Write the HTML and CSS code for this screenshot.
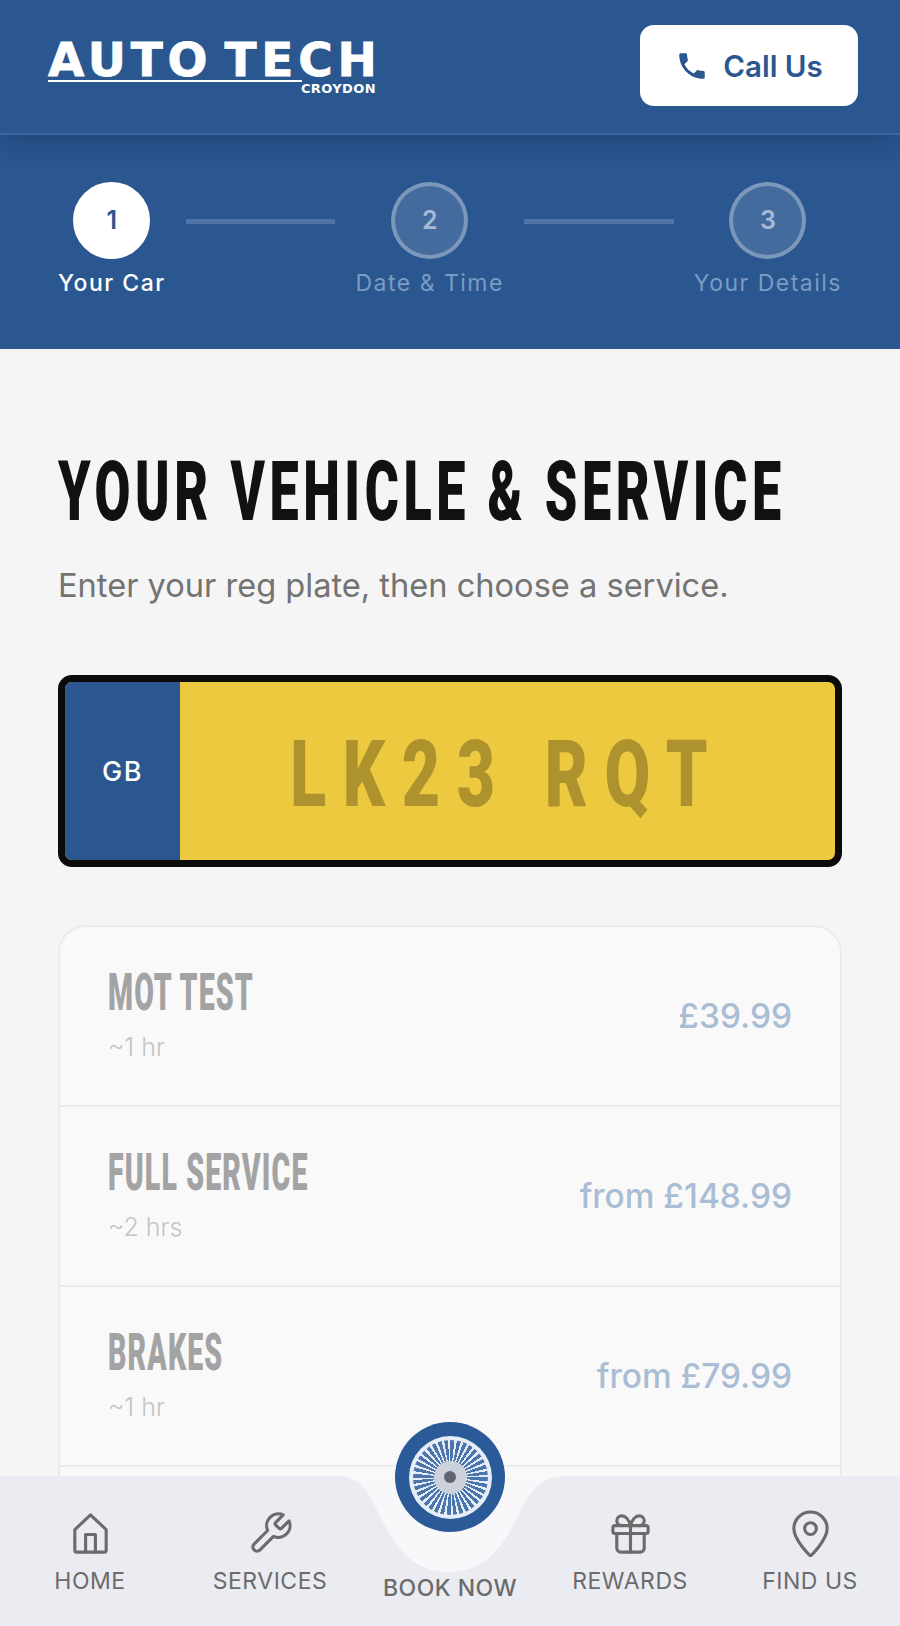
FILE: index.html
```html
<!DOCTYPE html>
<html lang="en">
<head>
  <meta charset="UTF-8">
  <meta name="viewport" content="width=device-width, initial-scale=1.0">
  <title>Book Now - Auto Tech Croydon</title>
  <link rel="stylesheet" href="styles.css">
</head>
<body>
  <header class="topbar">
    <a class="logo" href="#">
      <span class="logo-main">AUTO TECH</span>
      <span class="logo-rule"></span>
      <span class="logo-sub">CROYDON</span>
    </a>
    <a class="call-btn" href="#">
      <svg class="call-icon" viewBox="0 0 24 24"><path d="M6.62 10.79c1.44 2.83 3.76 5.14 6.59 6.59l2.2-2.2c.27-.27.67-.36 1.02-.24 1.12.37 2.33.57 3.57.57.55 0 1 .45 1 1V20c0 .55-.45 1-1 1-9.39 0-17-7.61-17-17 0-.55.45-1 1-1h3.5c.55 0 1 .45 1 1 0 1.25.2 2.45.57 3.57.11.35.03.74-.25 1.02l-2.2 2.2z"/></svg>
      Call Us
    </a>
  </header>

  <div class="stepper">
    <div class="step active">
      <div class="step-num">1</div>
      <span class="step-label">Your Car</span>
    </div>
    <div class="step-line"></div>
    <div class="step">
      <div class="step-num">2</div>
      <span class="step-label">Date &amp; Time</span>
    </div>
    <div class="step-line"></div>
    <div class="step">
      <div class="step-num">3</div>
      <span class="step-label">Your Details</span>
    </div>
  </div>

  <main class="content">
    <h1>YOUR VEHICLE &amp; SERVICE</h1>
    <p class="lead">Enter your reg plate, then choose a service.</p>

    <div class="plate">
      <div class="plate-gb">GB</div>
      <div class="plate-reg"><span>LK23 RQT</span></div>
    </div>

    <div class="services">
      <div class="service">
        <div>
          <h3>MOT TEST</h3>
          <p class="duration">~1 hr</p>
        </div>
        <span class="price">£39.99</span>
      </div>
      <div class="service">
        <div>
          <h3>FULL SERVICE</h3>
          <p class="duration">~2 hrs</p>
        </div>
        <span class="price">from £148.99</span>
      </div>
      <div class="service">
        <div>
          <h3>BRAKES</h3>
          <p class="duration">~1 hr</p>
        </div>
        <span class="price">from £79.99</span>
      </div>
      <div class="service"></div>
    </div>
  </main>

  <nav class="bottom-nav">
    <svg class="notch" viewBox="0 0 900 150"><path d="M336 0C362 0 368 16 380 40C398 78 418 96 449 96C480 96 500 78 518 40C530 16 538 0 566 0Z"/></svg>
    <a class="nav-item" href="#">
      <svg class="nav-icon" viewBox="0 0 24 24"><path d="M4 10l8-7.500 8 7.500v10.500a1 1 0 0 1-1 1H5a1 1 0 0 1-1-1z"/><path d="M9.500 21.500V12.500h5v9"/></svg>
      HOME
    </a>
    <a class="nav-item" href="#">
      <svg class="nav-icon" viewBox="0 0 24 24"><path d="M14.700 6.300a1 1 0 0 0 0 1.400l1.600 1.600a1 1 0 0 0 1.400 0l3.770-3.770a6 6 0 0 1-7.940 7.940l-6.910 6.910a2.120 2.120 0 0 1-3-3l6.910-6.910a6 6 0 0 1 7.940-7.940l-3.760 3.760z"/></svg>
      SERVICES
    </a>
    <a class="nav-item book" href="#">
      <div class="wheel">
        <div class="wheel-rim">
          <div class="wheel-spokes">
            <div class="wheel-hub"><div class="wheel-dot"></div></div>
          </div>
        </div>
      </div>
      BOOK NOW
    </a>
    <a class="nav-item" href="#">
      <svg class="nav-icon" viewBox="0 0 24 24"><rect x="3" y="8" width="18" height="4" rx="1"/><path d="M12 8v13.500"/><path d="M19 12v7.500a2 2 0 0 1-2 2H7a2 2 0 0 1-2-2V12"/><path d="M7.500 8a2.500 2.500 0 0 1 0-5A4.800 8 0 0 1 12 8a4.800 8 0 0 1 4.500-5 2.500 2.500 0 0 1 0 5"/></svg>
      REWARDS
    </a>
    <a class="nav-item" href="#">
      <svg class="nav-icon" viewBox="0 0 24 24"><path d="M20.500 9.500c0 6-8.500 14-8.500 14s-8.500-8-8.500-14a8.500 8.500 0 0 1 17 0Z"/><circle cx="12" cy="9.500" r="3"/></svg>
      FIND US
    </a>
  </nav>
</body>
</html>
```

FILE: styles.css
```css
:root {
  --blue: #2a5790;
  --text-font: 'Inter', 'Liberation Sans', sans-serif;
  --display-font: 'Roboto', 'Liberation Sans', sans-serif;
}

* {
  box-sizing: border-box;
}

html, body {
  height: 1626px;
  overflow: hidden;
}

body {
  margin: 0;
  background: #f5f5f5;
  color: #111;
  font-family: var(--text-font);
}

a {
  text-decoration: none;
  color: inherit;
}

.topbar {
  position: relative;
  z-index: 1;
  display: flex;
  justify-content: space-between;
  align-items: center;
  height: 135px;
  padding: 0 42px 2px 48px;
  background: var(--blue);
  border-bottom: 2px solid #3a659e;
  box-shadow: 0 8px 24px rgba(10, 30, 70, 0.28);
}

.logo {
  display: flex;
  flex-direction: column;
  width: 328px;
  margin-top: 3px;
  color: #fff;
}

.logo-main {
  font-family: 'DejaVu Sans', sans-serif;
  font-weight: 700;
  font-size: 47px;
  line-height: 40px;
  letter-spacing: 4.800px;
  word-spacing: -9px;
  white-space: nowrap;
  -webkit-text-stroke: 0.8px #fff;
}

.logo-rule {
  width: 254px;
  height: 2px;
  background: #fff;
}

.logo-sub {
  align-self: flex-end;
  font-family: 'DejaVu Sans', sans-serif;
  font-weight: 700;
  font-size: 13px;
  line-height: 13px;
  letter-spacing: 0.4px;
}

.call-btn {
  display: flex;
  align-items: center;
  justify-content: center;
  gap: 14px;
  width: 218px;
  height: 81px;
  background: #fff;
  color: var(--blue);
  border-radius: 14px;
  font-size: 29.500px;
  font-weight: 600;
}

.call-icon {
  width: 34px;
  height: 34px;
  fill: var(--blue);
}

.stepper {
  display: flex;
  align-items: flex-start;
  gap: 20px;
  height: 214px;
  padding: 47px 58px 0;
  background: var(--blue);
}

.step {
  display: flex;
  flex-direction: column;
  align-items: center;
  gap: 11px;
}

.step-num {
  display: flex;
  align-items: center;
  justify-content: center;
  width: 77px;
  height: 77px;
  padding-bottom: 2px;
  border: 4px solid rgba(255, 255, 255, 0.3);
  border-radius: 50%;
  background: rgba(255, 255, 255, 0.12);
  color: #a5bad6;
  font-size: 25px;
  font-weight: 600;
}

.step-label {
  color: #7c9bc3;
  font-size: 23px;
  line-height: 26px;
  letter-spacing: 1.500px;
  white-space: nowrap;
}

.step.active .step-num {
  background: #fff;
  border-color: #fff;
  color: var(--blue);
}

.step.active .step-label {
  color: #fff;
  font-weight: 500;
}

.step-line {
  flex: 1;
  height: 5px;
  margin-top: 37px;
  background: #4f74a7;
}

.content {
  padding: 108px 58px 0;
}

h1 {
  width: fit-content;
  margin: 0;
  font-family: var(--display-font);
  font-size: 84px;
  line-height: 70px;
  font-weight: 900;
  letter-spacing: 7.400px;
  white-space: nowrap;
  color: #111;
  transform: scaleX(0.62);
  transform-origin: left center;
}

.lead {
  margin: 37px 0 0;
  font-size: 32.600px;
  line-height: 42px;
  color: #737373;
}

.plate {
  display: flex;
  height: 192px;
  margin-top: 69px;
  border: 7px solid #0c0b0a;
  border-radius: 14px;
  overflow: hidden;
  background: #edc940;
}

.plate-gb {
  display: flex;
  align-items: center;
  justify-content: center;
  width: 115px;
  background: var(--blue);
  color: #fff;
  font-size: 27px;
  font-weight: 500;
  letter-spacing: 1.500px;
}

.plate-reg {
  flex: 1;
  display: flex;
  align-items: center;
  justify-content: center;
  padding-top: 6px;
  font-family: var(--display-font);
  font-size: 92px;
  font-weight: 900;
  letter-spacing: 23px;
  white-space: pre;
  color: #ae922e;
}

.plate-reg span {
  transform: scaleX(0.72);
}

.services {
  margin-top: 58px;
  background: #f9f9f9;
  border: 2px solid #ebebeb;
  border-radius: 28px 28px 0 0;
}

.service {
  display: flex;
  justify-content: space-between;
  align-items: center;
  height: 180px;
  padding: 0 48px;
  border-bottom: 2px solid #ebebeb;
}

.service h3 {
  width: fit-content;
  margin: 0;
  font-family: var(--display-font);
  font-size: 51px;
  line-height: 42px;
  font-weight: 900;
  letter-spacing: 2px;
  white-space: nowrap;
  color: #a3a3a3;
  transform: scaleX(0.56);
  transform-origin: left center;
}

.duration {
  margin: 18px 0 -2px;
  font-size: 25px;
  line-height: 30px;
  font-weight: 300;
  color: #c4c4c4;
}

.price {
  font-size: 33.400px;
  font-weight: 550;
  color: #a9bdd4;
}

.bottom-nav {
  position: fixed;
  left: 0;
  right: 0;
  bottom: 0;
  display: grid;
  grid-template-columns: repeat(5, 180px);
  height: 150px;
  background: #ebecf2;
}

.notch {
  position: absolute;
  top: 0;
  left: 0;
  width: 900px;
  height: 150px;
  fill: #f8f8fa;
}

.nav-item {
  position: relative;
  display: flex;
  flex-direction: column;
  align-items: center;
  gap: 9px;
  padding-top: 34px;
  color: #6b6b6b;
  font-size: 23px;
  line-height: 30px;
  letter-spacing: 0.5px;
}

.nav-icon {
  width: 47px;
  height: 47px;
  fill: none;
  stroke: #6b6b6b;
  stroke-width: 1.600;
  stroke-linecap: round;
  stroke-linejoin: round;
}

.nav-item.book {
  justify-content: flex-end;
  padding-bottom: 23px;
  font-weight: 500;
}

.wheel {
  position: absolute;
  top: -54px;
  left: 35px;
  display: flex;
  align-items: center;
  justify-content: center;
  width: 110px;
  height: 110px;
  border-radius: 50%;
  background: #2a5a98;
}

.wheel-rim {
  display: flex;
  align-items: center;
  justify-content: center;
  width: 83px;
  height: 83px;
  border-radius: 50%;
  background: #e6edf7;
}

.wheel-spokes {
  display: flex;
  align-items: center;
  justify-content: center;
  width: 75px;
  height: 75px;
  border-radius: 50%;
  background: repeating-conic-gradient(#4a75ad 0 6deg, #e6edf7 6deg 10deg);
}

.wheel-hub {
  display: flex;
  align-items: center;
  justify-content: center;
  width: 33px;
  height: 33px;
  border-radius: 50%;
  background: #cdd2da;
}

.wheel-dot {
  width: 12px;
  height: 12px;
  border-radius: 50%;
  background: #5f6672;
}
```
